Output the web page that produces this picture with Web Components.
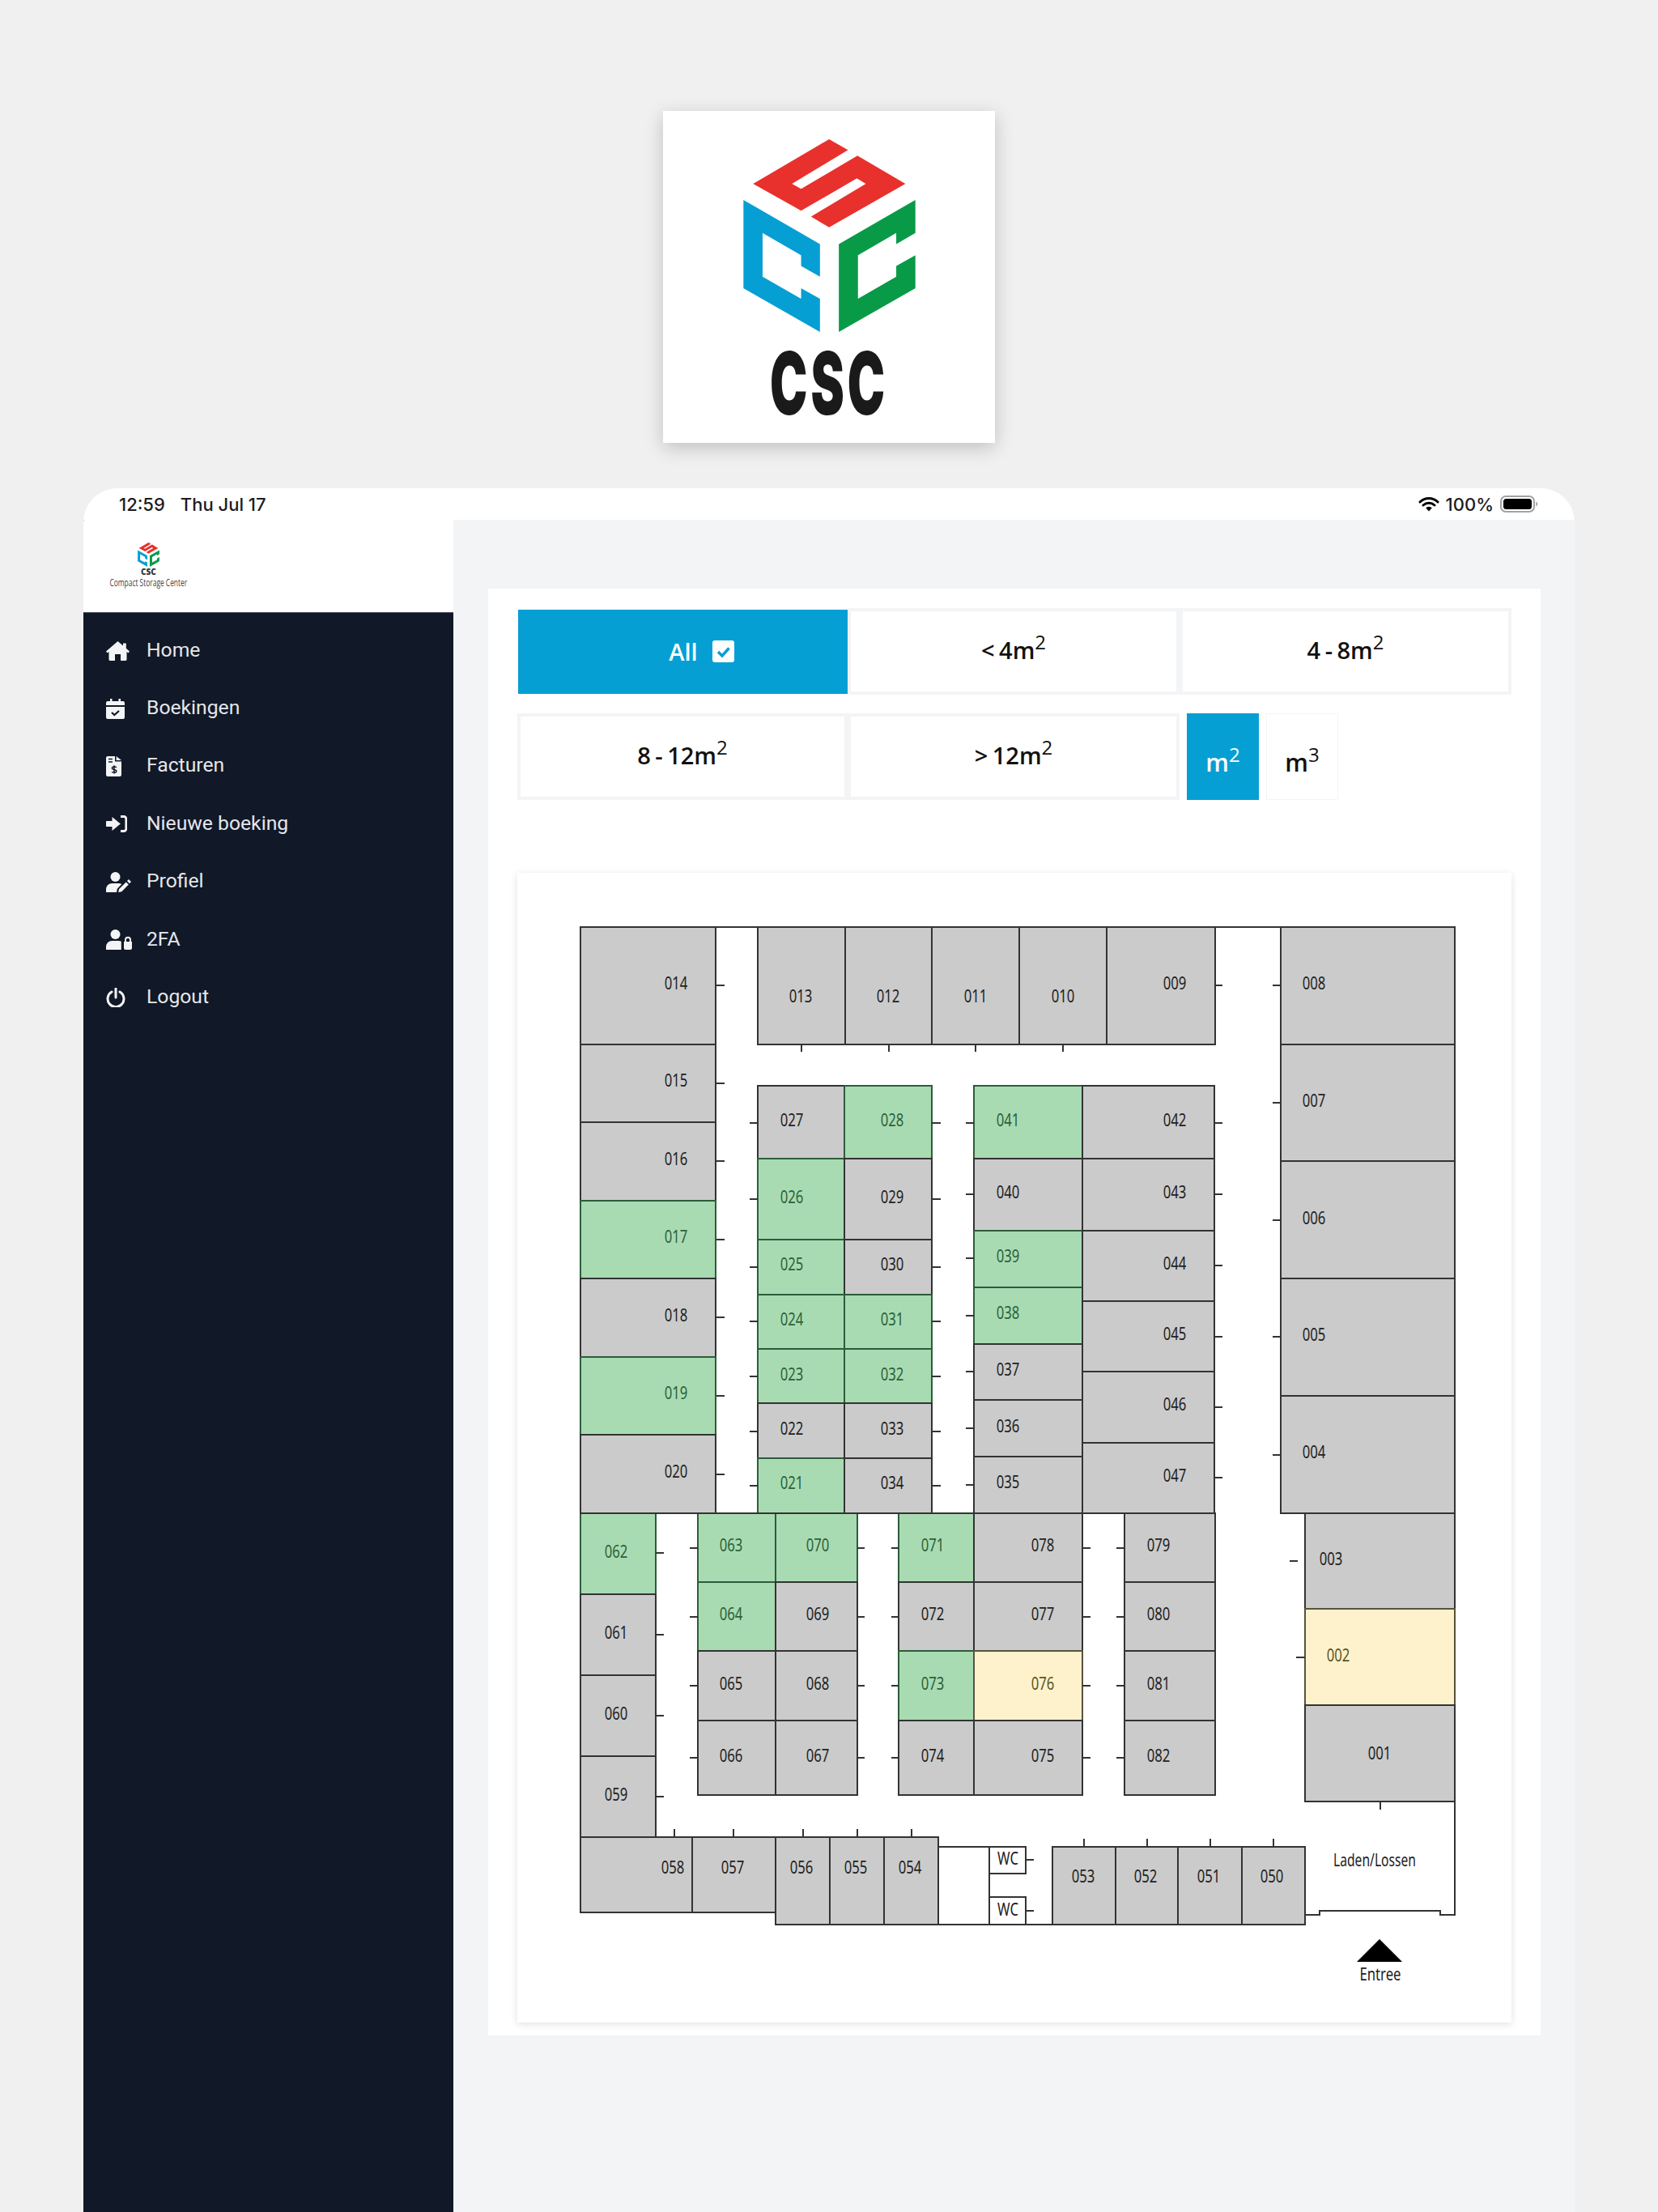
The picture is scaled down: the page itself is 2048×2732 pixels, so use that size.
<!DOCTYPE html>
<html>
<head>
<meta charset="utf-8">
<title>CSC</title>
<style>
  html, body { margin: 0; padding: 0; background: #f0f0f0; }
  body { height: 2732px; overflow: hidden; font-family: Roboto, sans-serif; }
</style>
</head>
<body>
<logo-card></logo-card>
<tablet-frame>
  <status-bar slot="status"></status-bar>
  <app-sidebar slot="side">
    <nav-item icon="home">Home</nav-item>
    <nav-item icon="calendar">Boekingen</nav-item>
    <nav-item icon="invoice">Facturen</nav-item>
    <nav-item icon="signin">Nieuwe boeking</nav-item>
    <nav-item icon="useredit">Profiel</nav-item>
    <nav-item icon="userlock">2FA</nav-item>
    <nav-item icon="power">Logout</nav-item>
  </app-sidebar>
  <booking-panel>
    <size-filters>
      <filter-btn active inset check>All</filter-btn>
      <filter-btn>&lt; 4m<sup>2</sup></filter-btn>
      <filter-btn>4 - 8m<sup>2</sup></filter-btn>
      <filter-btn>8 - 12m<sup>2</sup></filter-btn>
      <filter-btn>&gt; 12m<sup>2</sup></filter-btn>
      <filter-btn active unit>m<sup>2</sup></filter-btn>
      <filter-btn unit>m<sup>3</sup></filter-btn>
    </size-filters>
    <floor-map></floor-map>
  </booking-panel>
</tablet-frame>

<script>
const CUBE = `
  <polygon fill="#e8312d" points="672,155 742,195 534,320 568,339 777,216 955,320 672,482 605,442 808,320 775,300 568,420 390,320"/>
  <polygon fill="#069fd4" points="354,380 638,544 638,665 568,625 568,585 425,503 425,665 568,747 568,708 638,747 638,870 354,708"/>
  <polygon fill="#099a48" points="992,380 992,503 921,544 921,503 779,585 779,747 921,665 921,625 992,585 992,708 708,870 708,544"/>`;

class LogoCard extends HTMLElement {
  constructor() {
    super();
    this.attachShadow({ mode: "open" });
  }

  connectedCallback() {
    this.shadowRoot.innerHTML = `
      <style>
        :host {
          display: flex;
          flex-direction: column;
          align-items: center;
          box-sizing: border-box;
          width: 410px;
          height: 410px;
          margin: 137px auto 0;
          padding-top: 35px;
          background: #fff;
          box-shadow: 0 6px 22px rgba(0,0,0,0.2);
        }
        svg { display: block; width: 213px; height: 238px; }
        .name {
          margin-top: 24px;
          font-family: Inter, sans-serif;
          font-weight: 900;
          font-size: 107px;
          line-height: 78px;
          letter-spacing: 7px;
          color: #1a1a1a;
          transform: scaleX(0.58);
        }
      </style>
      <svg viewBox="354 155 638 715">${CUBE}</svg>
      <div class="name">CSC</div>
    `;
  }
}

class TabletFrame extends HTMLElement {
  constructor() {
    super();
    this.attachShadow({ mode: "open" });
  }

  connectedCallback() {
    this.shadowRoot.innerHTML = `
      <style>
        :host {
          display: flex;
          flex-direction: column;
          height: 2130px;
          margin: 56px 103px 0;
          background: #f3f4f6;
          border-radius: 42px 42px 0 0;
          overflow: hidden;
        }
        .body { flex: 1; display: flex; min-height: 0; }
      </style>
      <slot name="status"></slot>
      <div class="body">
        <slot name="side"></slot>
        <slot></slot>
      </div>
    `;
  }
}

class StatusBar extends HTMLElement {
  constructor() {
    super();
    this.attachShadow({ mode: "open" });
  }

  connectedCallback() {
    this.shadowRoot.innerHTML = `
      <style>
        :host {
          display: flex;
          align-items: center;
          justify-content: space-between;
          height: 39px;
          padding: 0 44px 0 44px;
          background: #fff;
          font-family: Inter, sans-serif;
          font-size: 22px;
          font-weight: 500;
          color: #1c1c1e;
        }
        .left { display: flex; gap: 19px; }
        .right { display: flex; align-items: center; gap: 8px; }
        svg { display: block; }
      </style>
      <div class="left"><span>12:59</span><span>Thu Jul 17</span></div>
      <div class="right">
        <svg width="26" height="19" viewBox="0 0 26 19">
          <path d="M2 7a16 16 0 0 1 22 0M6 11a10.500 10.500 0 0 1 14 0" fill="none" stroke="#000" stroke-width="3" stroke-linecap="round"/>
          <path d="M9.200 14.200a5.400 5.400 0 0 1 7.600 0L13 18.500z" fill="#000"/>
        </svg>
        <span>100%</span>
        <svg width="48" height="21" viewBox="0 0 48 21">
          <rect x="1" y="1" width="41" height="19" rx="6" fill="none" stroke="#a2a2a2" stroke-width="2"/>
          <rect x="4" y="4" width="35" height="13" rx="3.500" fill="#000"/>
          <path d="M44.500 7.500c2 .8 2 5.200 0 6z" fill="#8c8c8c"/>
        </svg>
      </div>
    `;
  }
}

class AppSidebar extends HTMLElement {
  constructor() {
    super();
    this.attachShadow({ mode: "open" });
  }

  connectedCallback() {
    this.shadowRoot.innerHTML = `
      <style>
        :host {
          display: flex;
          flex-direction: column;
          flex: 0 0 457px;
          background: #111827;
        }
        header {
          box-sizing: border-box;
          height: 115px;
          padding: 28px 0 0 32px;
          background: #fff;
          border-bottom: 1px solid #4b5563;
        }
        .brand {
          display: flex;
          flex-direction: column;
          align-items: center;
          width: 97px;
          font-family: "Open Sans", sans-serif;
        }
        svg { display: block; width: 27px; height: 30px; }
        .csc {
          font-size: 11px;
          line-height: 11px;
          font-weight: 800;
          color: #333;
          transform: scaleX(0.9);
        }
        .full {
          margin-top: 2px;
          font-size: 12px;
          line-height: 13px;
          font-weight: 500;
          white-space: nowrap;
          color: #444;
          transform: scaleX(0.7);
        }
        nav { padding-top: 11px; display: flex; flex-direction: column; }
      </style>
      <header>
        <div class="brand">
          <svg viewBox="354 155 638 715">${CUBE}</svg>
          <div class="csc">CSC</div>
          <div class="full">Compact Storage Center</div>
        </div>
      </header>
      <nav><slot></slot></nav>
    `;
  }
}

const NAV_ICONS = {
  home: `<svg width="29" height="24" viewBox="0 0 29 24">
      <path fill="#f3f4f6" d="M14.500 0L21 5.500V2.500h3.800v6.300L29 12.500 27.400 14.500 25.500 13v9.500a1.500 1.500 0 0 1-1.500 1.500h-6V16h-7v8H5a1.500 1.500 0 0 1-1.500-1.500V13L1.600 14.500 0 12.500z"/>
    </svg>`,
  calendar: `<svg width="23" height="25" viewBox="0 0 23 25">
      <path fill="#f3f4f6" d="M5 0h2.500v3h8V0H18v3h3a2 2 0 0 1 2 2v3H0V5a2 2 0 0 1 2-2h3zM0 10h23v13a2 2 0 0 1-2 2H2a2 2 0 0 1-2-2z"/>
      <path d="M7 17l3.300 3 5.700-5" fill="none" stroke="#111827" stroke-width="2.300"/>
    </svg>`,
  invoice: `<svg width="19" height="25" viewBox="0 0 19 25">
      <path fill="#f3f4f6" d="M2 0h9v6.500h8V23a2 2 0 0 1-2 2H2a2 2 0 0 1-2-2V2a2 2 0 0 1 2-2zM12.600 0L19 5h-6.400z"/>
      <path d="M3 3.500h5M3 7h5" stroke="#111827" stroke-width="1.500"/>
      <path d="M12.800 13.800c-1-1.200-5.400-1.300-5.400.9 0 2.400 5.400 1.300 5.400 3.700 0 2.200-4.500 2-5.600.8M10 11.300v10.200" fill="none" stroke="#111827" stroke-width="1.500"/>
    </svg>`,
  signin: `<svg width="26" height="21" viewBox="0 0 26 21">
      <path fill="#f3f4f6" d="M.8 7H7.500V2l10.300 8.500L7.500 19v-5H.8a.8.800 0 0 1-.8-.8V7.800A.8.800 0 0 1 .8 7z"/>
      <path d="M18 1.500h4a2.800 2.800 0 0 1 2.800 2.800v12.400a2.800 2.800 0 0 1-2.800 2.800h-4" fill="none" stroke="#f3f4f6" stroke-width="2.800"/>
    </svg>`,
  useredit: `<svg width="32" height="25" viewBox="0 0 32 25">
      <circle cx="11.500" cy="6" r="6" fill="#f3f4f6"/>
      <path fill="#f3f4f6" d="M0 25v-3.500C0 17 3.500 14 7.500 14h8c1.500 0 2.800.4 3.800 1L13.800 20.800 13 25zM15.200 25l.9-4 8.600-8.600 3.200 3.200-8.600 8.600zM26 11l2-2 3 3-2 2.200z"/>
    </svg>`,
  userlock: `<svg width="32" height="25" viewBox="0 0 32 25">
      <circle cx="11.500" cy="6" r="6" fill="#f3f4f6"/>
      <path fill="#f3f4f6" d="M0 25v-3.500C0 17 3.500 14 7.500 14h8c1.300 0 2.300.2 3.300.7V25zM22 15h10v8a2 2 0 0 1-2 2h-6a2 2 0 0 1-2-2z"/>
      <path d="M24 15.500V12.700a3 3 0 0 1 6 0v2.800" fill="none" stroke="#f3f4f6" stroke-width="2"/>
    </svg>`,
  power: `<svg width="24" height="24" viewBox="0 0 24 24">
      <path d="M7 5a10 10 0 1 0 10 0M12 1v11" fill="none" stroke="#f3f4f6" stroke-width="3" stroke-linecap="round"/>
    </svg>`,
};

class NavItem extends HTMLElement {
  constructor() {
    super();
    this.attachShadow({ mode: "open" });
  }

  connectedCallback() {
    this.shadowRoot.innerHTML = `
      <style>
        :host {
          display: flex;
          align-items: center;
          height: 71.400px;
          padding-left: 28px;
          font-family: Roboto, sans-serif;
          font-size: 24.700px;
          color: #e5e7eb;
        }
        .icon { flex: 0 0 50px; display: flex; align-items: center; }
        .text { margin-top: -3px; }
        svg { display: block; }
      </style>
      <span class="icon">${NAV_ICONS[this.getAttribute("icon")]}</span>
      <span class="text"><slot></slot></span>
    `;
  }
}

class BookingPanel extends HTMLElement {
  constructor() {
    super();
    this.attachShadow({ mode: "open" });
  }

  connectedCallback() {
    this.shadowRoot.innerHTML = `
      <style>
        :host {
          display: block;
          box-sizing: border-box;
          flex: none;
          width: 1300px;
          height: 1787px;
          margin: 85px 0 0 43px;
          padding: 24px 36px 0;
          background: #fff;
        }
      </style>
      <slot></slot>
    `;
  }
}

class SizeFilters extends HTMLElement {
  constructor() {
    super();
    this.attachShadow({ mode: "open" });
  }

  connectedCallback() {
    this.shadowRoot.innerHTML = `
      <style>
        :host {
          display: grid;
          grid-template-columns: 408px 410px 88px 9px 89px 224px;
          grid-auto-rows: 107px;
          row-gap: 23px;
          width: 1228px;
        }
        ::slotted(filter-btn:nth-child(3)) { grid-column: 3 / 7; }
        ::slotted(filter-btn:nth-child(4)) { grid-column: 1; grid-row: 2; }
        ::slotted(filter-btn:nth-child(5)) { grid-column: 2; grid-row: 2; }
        ::slotted(filter-btn:nth-child(6)) { grid-column: 3; grid-row: 2; margin-left: 9px; width: 89px; }
        ::slotted(filter-btn:nth-child(7)) { grid-column: 5; grid-row: 2; margin-left: 10px; width: 89px; }
      </style>
      <slot></slot>
    `;
  }
}

class FilterBtn extends HTMLElement {
  constructor() {
    super();
    this.attachShadow({ mode: "open" });
  }

  connectedCallback() {
    const tick = this.hasAttribute("check")
      ? `<svg width="27" height="27" viewBox="0 0 27 27">
           <rect width="27" height="27" rx="3" fill="#fff"/>
           <path d="M7 14l5 5 8.500-9.500" fill="none" stroke="#069fd4" stroke-width="3.400"/>
         </svg>`
      : "";
    this.shadowRoot.innerHTML = `
      <style>
        :host {
          display: flex;
          align-items: center;
          justify-content: center;
          gap: 18px;
          box-sizing: border-box;
          height: 107px;
          padding-bottom: 5px;
          border: 4px solid #f3f4f6;
          background: #fff;
          font-family: "Open Sans", sans-serif;
          font-size: 29px;
          font-weight: 600;
          word-spacing: -2px;
          color: #111;
        }
        :host([active]) { background: #069fd4; border-color: #069fd4; color: #fff; }
        :host([inset]) { height: 104px; margin: 1.500px 0 0 1px; padding-left: 46px; padding-bottom: 1px; }
        :host([unit]) { padding: 14px 0 0; border-width: 1px; font-size: 30px; }
        :host([unit][active]) { border-width: 0; }
        ::slotted(sup) { font-size: 24px; line-height: 0; vertical-align: 0.5em; font-weight: 500; }
        svg { display: block; }
      </style>
      <span><slot></slot></span>${tick}
    `;
  }
}

// map data is in page coordinates, the card starts at MAP_X, MAP_Y
const MAP_X = 639;
const MAP_Y = 1077;

// [x1, x2, label x, [row edges], [[label, label y, state], ...]]
const COLUMNS = [
  [716.6, 884.5, 835, [1144, 1289, 1385, 1482, 1578, 1675, 1771, 1868],
    [["014", 1214], ["015", 1334], ["016", 1431], ["017", 1527, "g"], ["018", 1624], ["019", 1720, "g"], ["020", 1816.5]]],
  [1582, 1797, 1623, [1144, 1289, 1433, 1578, 1723, 1868],
    [["008", 1214], ["007", 1359], ["006", 1503.5], ["005", 1648], ["004", 1793]]],
  [936, 1042.5, 978, [1340, 1429.5, 1530, 1597.5, 1665, 1732, 1800, 1868],
    [["027", 1383], ["026", 1478, "g"], ["025", 1561, "g"], ["024", 1629, "g"], ["023", 1696.5, "g"], ["022", 1764], ["021", 1831, "g"]]],
  [1042.5, 1151.4, 1102, [1340, 1429.5, 1530, 1597.5, 1665, 1732, 1800, 1868],
    [["028", 1383, "g"], ["029", 1478], ["030", 1561], ["031", 1629, "g"], ["032", 1696.5, "g"], ["033", 1764], ["034", 1831]]],
  [1203, 1336.7, 1245, [1340, 1429.5, 1519, 1588.7, 1658.8, 1728, 1797.6, 1868],
    [["041", 1383, "g"], ["040", 1472], ["039", 1551, "g"], ["038", 1621, "g"], ["037", 1690.5], ["036", 1761], ["035", 1830]]],
  [1336.7, 1500.5, 1451, [1340, 1429.5, 1519, 1606, 1693, 1780.7, 1868],
    [["042", 1383], ["043", 1472], ["044", 1560], ["045", 1647], ["046", 1734], ["047", 1821.5]]],
  [716.6, 810, 761, [1868, 1968, 2068, 2168, 2268],
    [["062", 1916, "g"], ["061", 2016], ["060", 2115.5], ["059", 2216]]],
  [862, 958, 903, [1868, 1952.7, 2038, 2123.6, 2216],
    [["063", 1908, "g"], ["064", 1993, "g"], ["065", 2078.5], ["066", 2167.8]]],
  [958, 1058.6, 1009.5, [1868, 1952.7, 2038, 2123.6, 2216],
    [["070", 1908, "g"], ["069", 1993], ["068", 2078.5], ["067", 2167.8]]],
  [1110, 1203, 1152, [1868, 1952.7, 2038, 2123.6, 2216],
    [["071", 1908, "g"], ["072", 1993], ["073", 2078.5, "g"], ["074", 2167.8]]],
  [1203, 1336.7, 1287.6, [1868, 1952.7, 2038, 2123.6, 2216],
    [["078", 1908], ["077", 1993], ["076", 2078.5, "y"], ["075", 2167.8]]],
  [1389, 1500.5, 1431, [1868, 1952.7, 2038, 2123.6, 2216],
    [["079", 1908], ["080", 1993], ["081", 2078.5], ["082", 2167.8]]],
];

// [label, x1, y1, x2, y2, label x, label y, state]
const SINGLE_UNITS = [
  ["013", 936, 1144, 1044, 1289, 989, 1230],
  ["012", 1044, 1144, 1151, 1289, 1097, 1230],
  ["011", 1151, 1144, 1259, 1289, 1204.5, 1230],
  ["010", 1259, 1144, 1367, 1289, 1312.5, 1230],
  ["009", 1367, 1144, 1500.5, 1289, 1451, 1214],
  ["003", 1611.7, 1868, 1797, 1986, 1644, 1924.5],
  ["002", 1611.7, 1986, 1797, 2105, 1653, 2043.5, "y"],
  ["001", 1611.7, 2105, 1797, 2223.7, 1704, 2165],
  ["058", 716.6, 2268, 854.6, 2361, 831, 2306],
  ["057", 854.6, 2268, 958, 2361, 905, 2306],
  ["056", 958, 2268, 1025, 2376, 990, 2306],
  ["055", 1025, 2268, 1092, 2376, 1057, 2306],
  ["054", 1092, 2268, 1159, 2376, 1123.7, 2306],
  ["053", 1299.6, 2280, 1377.8, 2376, 1337.6, 2317],
  ["052", 1377.8, 2280, 1455.4, 2376, 1415, 2317],
  ["051", 1455.4, 2280, 1533.6, 2376, 1493, 2317],
  ["050", 1533.6, 2280, 1611.7, 2376, 1571, 2317],
  ["WC", 1222, 2280, 1266.6, 2313, 1245, 2294.5, "w"],
  ["WC", 1222, 2342.4, 1266.6, 2376, 1245, 2357.5, "w"],
];

// [from x, to x, [y, ...]] horizontal ticks
const H_TICKS = [
  [884.5, 894.5, [1216, 1337, 1433, 1530, 1626, 1723, 1819.5]],
  [1500.5, 1510, [1216, 1386, 1474, 1562, 1650, 1737, 1824]],
  [1572, 1582, [1216, 1361, 1505.5, 1650, 1795.5]],
  [926, 936, [1386, 1480, 1564, 1631, 1699, 1767, 1834]],
  [1151.4, 1161.7, [1386, 1480, 1564, 1631, 1699, 1767, 1834]],
  [1193.4, 1203, [1386, 1474, 1553, 1623.5, 1693, 1763, 1833]],
  [810, 820, [1917, 2018, 2117.7, 2218]],
  [852, 862, [1910.6, 1995.6, 2081, 2170]],
  [1058.6, 1068, [1910.6, 1995.6, 2081, 2170]],
  [1100.5, 1110, [1910.6, 1995.6, 2081, 2170]],
  [1336.7, 1347, [1910.6, 1995.6, 2081, 2170]],
  [1379, 1389, [1910.6, 1995.6, 2081, 2170]],
  [1593, 1603, [1927]],
  [1601, 1611.7, [2045.7]],
  [1266.6, 1277, [2296, 2359]],
];

// [from y, to y, [x, ...]] vertical ticks
const V_TICKS = [
  [1289, 1298, [990, 1098, 1205, 1313]],
  [2258, 2268, [832.7, 906, 992, 1058.6, 1125.5]],
  [2270, 2280, [1339, 1416.6, 1494.7, 1573]],
  [2223.7, 2234, [1704.5]],
];

// building walls that don't belong to one unit [x1, y1, x2, y2]
const WALLS = [
  [884.5, 1144, 936, 1144],
  [1500.5, 1144, 1582, 1144],
  [716.6, 1868, 1500.5, 1868],
  [1797, 2223.7, 1797, 2364],
  [1779, 2364, 1797, 2364],
  [1779, 2359, 1779, 2364],
  [1630, 2359, 1779, 2359],
  [1630, 2359, 1630, 2364],
  [1611.7, 2364, 1630, 2364],
  [1159, 2280, 1222, 2280],
  [1159, 2376, 1299.6, 2376],
  [1222, 2280, 1222, 2376],
];

class FloorMap extends HTMLElement {
  constructor() {
    super();
    this.attachShadow({ mode: "open" });
  }

  connectedCallback() {
    const px = (x, y, w, h) =>
      `left:${x - MAP_X}px;top:${y - MAP_Y}px;width:${w}px;height:${h}px`;
    let boxes = "";
    let labels = "";

    const addUnit = (label, x1, y1, x2, y2, lx, ly, state = "") => {
      boxes += `<div class="unit ${state}" style="${px(x1 - 1, y1 - 1, x2 - x1 + 2, y2 - y1 + 2)}"></div>`;
      labels += `<span class="label ${state}" style="left:${lx - MAP_X}px;top:${ly - MAP_Y}px">${label}</span>`;
    };

    COLUMNS.forEach(([x1, x2, lx, edges, rows]) => {
      rows.forEach(([label, ly, state], i) => addUnit(label, x1, edges[i], x2, edges[i + 1], lx, ly, state));
    });
    SINGLE_UNITS.forEach((u) => addUnit(...u));

    let lines = "";
    H_TICKS.forEach(([x1, x2, ys]) => ys.forEach((y) => {
      lines += `<i style="${px(x1, y - 1, x2 - x1, 2)}"></i>`;
    }));
    V_TICKS.forEach(([y1, y2, xs]) => xs.forEach((x) => {
      lines += `<i style="${px(x - 1, y1, 2, y2 - y1)}"></i>`;
    }));
    WALLS.forEach(([x1, y1, x2, y2]) => {
      lines += `<i style="${px(x1 - 1, y1 - 1, x2 - x1 + 2, y2 - y1 + 2)}"></i>`;
    });

    this.shadowRoot.innerHTML = `
      <style>
        :host {
          display: block;
          position: relative;
          width: 1228px;
          height: 1420px;
          margin-top: 90px;
          background: #fff;
          box-shadow: 0 2px 9px rgba(0,0,0,0.12);
        }
        .unit {
          position: absolute;
          box-sizing: border-box;
          background: #cbcbcb;
          border: 2px solid #333;
        }
        .unit.g { background: #a9dbb3; border-color: #2c5c3a; }
        .unit.y { background: #fef2cd; border-color: #57533c; }
        .unit.w { background: #fff; }
        i { position: absolute; background: #333; }
        .label, .text {
          position: absolute;
          transform: translate(-50%, calc(-50% - 2px)) scaleX(0.76);
          font-family: "Noto Sans", sans-serif;
          font-size: 22px;
          line-height: 24px;
          white-space: nowrap;
          color: #222;
        }
        .text.tight { transform: translate(-50%, calc(-50% - 2px)) scaleX(0.71); }
        .label.g { color: #2c6238; }
        .label.y { color: #5d5520; }
        .arrow {
          position: absolute;
          left: ${1676 - MAP_X}px;
          top: ${2394 - MAP_Y}px;
          border-left: 28px solid transparent;
          border-right: 28px solid transparent;
          border-bottom: 28px solid #000;
        }
      </style>
      ${boxes}${lines}${labels}
      <span class="text tight" style="left:${1698 - MAP_X}px;top:${2296.5 - MAP_Y}px">Laden/Lossen</span>
      <div class="arrow"></div>
      <span class="text" style="left:${1705 - MAP_X}px;top:${2438 - MAP_Y}px">Entree</span>
    `;
  }
}

customElements.define("logo-card", LogoCard);
customElements.define("tablet-frame", TabletFrame);
customElements.define("status-bar", StatusBar);
customElements.define("app-sidebar", AppSidebar);
customElements.define("nav-item", NavItem);
customElements.define("booking-panel", BookingPanel);
customElements.define("size-filters", SizeFilters);
customElements.define("filter-btn", FilterBtn);
customElements.define("floor-map", FloorMap);
</script>
</body>
</html>
